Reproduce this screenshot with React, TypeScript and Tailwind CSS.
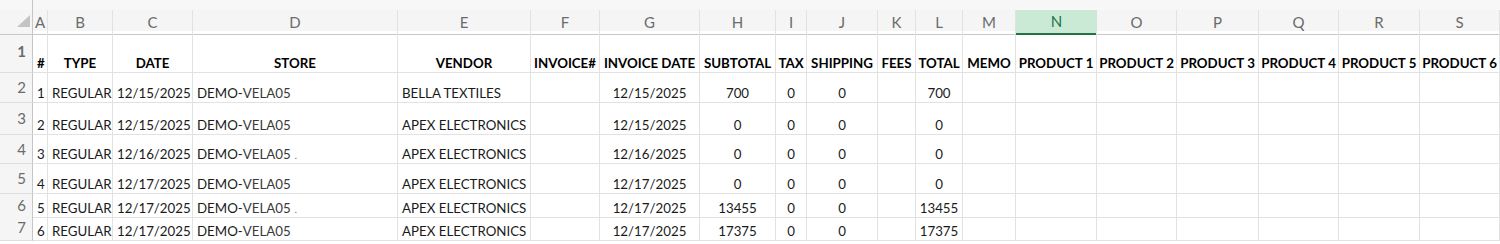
import React from 'react'

const cols =
  'grid grid-cols-[33px_15px_65px_80px_205px_133px_69px_100px_76px_31px_71px_38px_47px_53px_81px_80px_82px_80px_81px_80px]'

const letters = ['A', 'B', 'C', 'D', 'E', 'F', 'G', 'H', 'I', 'J', 'K', 'L', 'M', 'N', 'O', 'P', 'Q', 'R', 'S']

const headers: { label: string; align: 'left' | 'center' }[] = [
  { label: '#', align: 'left' },
  { label: 'TYPE', align: 'center' },
  { label: 'DATE', align: 'center' },
  { label: 'STORE', align: 'center' },
  { label: 'VENDOR', align: 'center' },
  { label: 'INVOICE#', align: 'center' },
  { label: 'INVOICE DATE', align: 'center' },
  { label: 'SUBTOTAL', align: 'center' },
  { label: 'TAX', align: 'center' },
  { label: 'SHIPPING', align: 'center' },
  { label: 'FEES', align: 'center' },
  { label: 'TOTAL', align: 'center' },
  { label: 'MEMO', align: 'center' },
  { label: 'PRODUCT 1', align: 'center' },
  { label: 'PRODUCT 2', align: 'center' },
  { label: 'PRODUCT 3', align: 'center' },
  { label: 'PRODUCT 4', align: 'center' },
  { label: 'PRODUCT 5', align: 'center' },
  { label: 'PRODUCT 6', align: 'center' },
]

const rows = [
  { h: 'h-[30px]', date: '12/15/2025', vendor: 'BELLA TEXTILES', sub: '700', total: '700', mark: false },
  { h: 'h-[32px]', date: '12/15/2025', vendor: 'APEX ELECTRONICS', sub: '0', total: '0', mark: false },
  { h: 'h-[29px]', date: '12/16/2025', vendor: 'APEX ELECTRONICS', sub: '0', total: '0', mark: true },
  { h: 'h-[30px]', date: '12/17/2025', vendor: 'APEX ELECTRONICS', sub: '0', total: '0', mark: false },
  { h: 'h-[21px]', date: '12/17/2025', vendor: 'APEX ELECTRONICS', sub: '13455', total: '13455', mark: true },
  { h: 'h-[26px]', date: '12/17/2025', vendor: 'APEX ELECTRONICS', sub: '17375', total: '17375', mark: false },
]

const cell = 'border-r border-b border-[#e2e2e2] flex items-end pb-[1px] leading-[15px] whitespace-nowrap overflow-visible'

function RowNum({ n }: { n: number }) {
  return (
    <div className="bg-[#f5f5f5] border-r border-r-[#c6c6c6] border-b border-b-[#dedede] flex items-center justify-end pr-[6px] text-[15px] text-[#6b6b6b]">
      {n}
    </div>
  )
}

function Cell({ children, center }: { children?: React.ReactNode; center?: boolean }) {
  return <div className={`${cell} px-[4px] ${center ? 'justify-center' : 'justify-start'}`}>{children}</div>
}

export default function App() {
  return (
    <div className="w-[1500px] h-[244px] overflow-hidden bg-white text-[13.3px] text-[#1a1a1a] font-['Lato','Liberation_Sans',sans-serif]">
      <div className="h-[10px] bg-[#f7f7f7] flex">
        <div className="w-[33px] border-r border-[#c6c6c6]" />
      </div>

      {/* column letters */}
      <div className={`${cols} h-[21px] bg-[#f5f5f5] text-[15px] text-[#6b6b6b]`}>
        <div className="border-r border-[#c6c6c6] border-b border-b-[#c8c8c8] relative">
          <div className="absolute left-[17px] top-[5px] w-0 h-0 border-l-[13px] border-l-transparent border-b-[12px] border-b-[#c4c4c4]" />
        </div>
        {letters.map((l) =>
          l === 'N' ? (
            <div key={l} className="bg-[#caead6] border-b-2 border-[#217346] flex items-center justify-center text-[#217346]">
              {l}
            </div>
          ) : (
            <div key={l} className="border-r border-[#e2e2e2] border-b border-b-[#c8c8c8] flex items-center justify-center">
              {l}
            </div>
          )
        )}
      </div>

      {/* header row */}
      <div className={`${cols} h-[42px] font-bold text-black`}>
        <RowNum n={1} />
        {headers.map((h) => (
          <Cell key={h.label} center={h.align === 'center'}>
            {h.label}
          </Cell>
        ))}
      </div>

      {rows.map((r, i) => (
        <div key={i} className={`${cols} ${r.h}`}>
          <RowNum n={i + 2} />
          <Cell>{i + 1}</Cell>
          <Cell>REGULAR</Cell>
          <Cell>{r.date}</Cell>
          <Cell>
            DEMO-<span className="text-[#3a3a3a]">VELA05</span>
            {r.mark && <span className="ml-[4px] text-[9px] text-[#555] leading-none mb-[2px]">.</span>}
          </Cell>
          <Cell>{r.vendor}</Cell>
          <Cell />
          <Cell center>{r.date}</Cell>
          <Cell center>{r.sub}</Cell>
          <Cell center>0</Cell>
          <Cell center>0</Cell>
          <Cell />
          <Cell center>{r.total}</Cell>
          <Cell />
          <Cell />
          <Cell />
          <Cell />
          <Cell />
          <Cell />
          <Cell />
        </div>
      ))}
    </div>
  )
}
